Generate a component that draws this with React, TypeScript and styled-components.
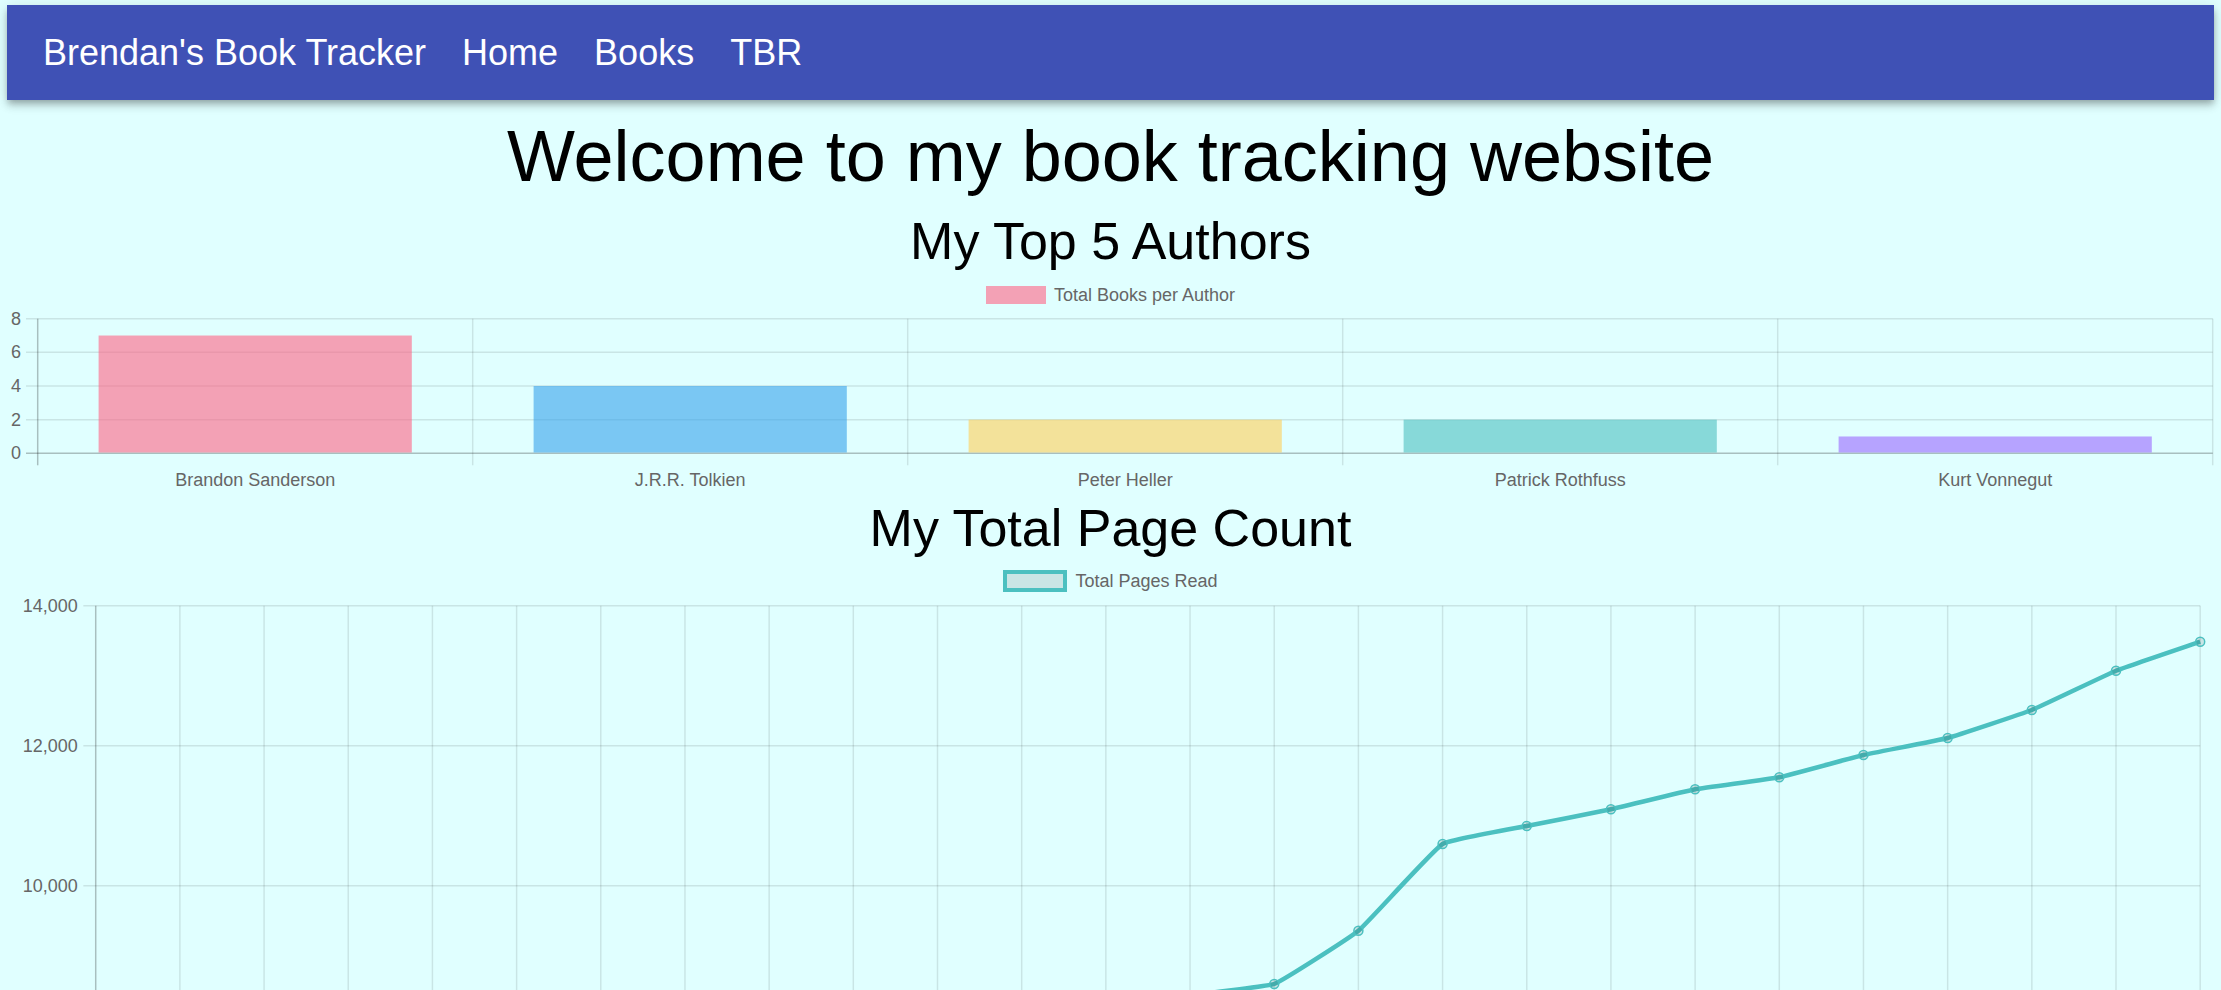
import React from 'react';
import styled, { createGlobalStyle } from 'styled-components';

const GlobalStyle = createGlobalStyle`
  html { scrollbar-width: none; }
  html::-webkit-scrollbar, body::-webkit-scrollbar { display: none; }
  body {
    margin: 0;
    background: #e0ffff;
    font-family: "Liberation Sans", Arial, Helvetica, sans-serif;
  }
`;

const Page = styled.div`
  padding-top: 5px;
`;

const NavBar = styled.header`
  display: flex;
  align-items: center;
  gap: 36px;
  height: 95px;
  margin: 0 7px;
  padding: 2px 36px 0;
  box-sizing: border-box;
  background: #3f51b5;
  color: #ffffff;
  box-shadow: 0 3px 6px -1.5px rgba(0, 0, 0, 0.2), 0 6px 7.5px 0 rgba(0, 0, 0, 0.14),
    0 1.5px 15px 0 rgba(0, 0, 0, 0.12);
`;

const NavItem = styled.a`
  font-size: 36px;
  line-height: 1.334;
  font-weight: 400;
  color: inherit;
  text-decoration: none;
  white-space: nowrap;
`;

const Main = styled.main`
  display: flex;
  flex-direction: column;
  text-align: center;
`;

const Title = styled.h1`
  margin: 14px 0 0;
  font-size: 72px;
  line-height: 1.167;
  font-weight: 400;
  color: #000;
`;

const SectionTitle = styled.h2<{ $gap: number }>`
  margin: ${(p) => p.$gap}px 0 0;
  font-size: 52px;
  line-height: 1.235;
  font-weight: 400;
  color: #000;
`;

const Legend = styled.div<{ $gap: number }>`
  display: flex;
  justify-content: center;
  align-items: center;
  gap: 8px;
  height: 18px;
  margin-top: ${(p) => p.$gap}px;
`;

const Swatch = styled.span<{ $fill: string; $stroke?: string }>`
  box-sizing: border-box;
  width: ${(p) => (p.$stroke ? 64 : 60)}px;
  height: ${(p) => (p.$stroke ? 22 : 18)}px;
  background: ${(p) => p.$fill};
  border: ${(p) => (p.$stroke ? `4px solid ${p.$stroke}` : 'none')};
`;

const LegendLabel = styled.span`
  font-size: 18px;
  line-height: 18px;
  color: #666;
`;

const ChartSvg = styled.svg`
  display: block;
  font-family: "Liberation Sans", Arial, sans-serif;
  font-size: 18px;
`;

const GRID = 'rgba(0,0,0,0.1)';
const ZERO = 'rgba(0,0,0,0.25)';
const TEAL = 'rgb(75,192,192)';

const authors = [
  { name: 'Brandon Sanderson', count: 7, color: 'rgba(255,99,132,0.6)' },
  { name: 'J.R.R. Tolkien', count: 4, color: 'rgba(54,162,235,0.6)' },
  { name: 'Peter Heller', count: 2, color: 'rgba(255,206,86,0.6)' },
  { name: 'Patrick Rothfuss', count: 2, color: 'rgba(75,192,192,0.6)' },
  { name: 'Kurt Vonnegut', count: 1, color: 'rgba(153,102,255,0.6)' },
];

const BarChart: React.FC = () => {
  const W = 2221;
  const H = 190;
  const top = 14.7;
  const unit = 16.825;
  const left = 37.7;
  const cat = 435;
  const right = left + cat * authors.length;
  const y = (v: number) => top + (8 - v) * unit;
  const barW = cat * 0.72;
  return (
    <ChartSvg width={W} height={H} viewBox={`0 0 ${W} ${H}`}>
      {[8, 6, 4, 2, 0].map((v) => (
        <g key={v}>
          <line x1={26} x2={right} y1={y(v)} y2={y(v)} stroke={v === 0 ? ZERO : GRID} strokeWidth={1.5} />
          <text x={21} y={y(v)} textAnchor="end" dominantBaseline="central" fill="#666">
            {v}
          </text>
        </g>
      ))}
      {authors.concat([authors[0]]).map((_, i) => (
        <line
          key={`v${i}`}
          x1={left + i * cat}
          x2={left + i * cat}
          y1={top}
          y2={y(0) + 12}
          stroke={i === 0 ? ZERO : GRID}
          strokeWidth={1.5}
        />
      ))}
      {authors.map((a, i) => (
        <g key={a.name}>
          <rect
            x={left + i * cat + (cat - barW) / 2}
            y={y(a.count)}
            width={barW}
            height={y(0) - y(a.count) - 0.8}
            fill={a.color}
          />
          <text x={left + i * cat + cat / 2} y={176} textAnchor="middle" dominantBaseline="central" fill="#666">
            {a.name}
          </text>
        </g>
      ))}
    </ChartSvg>
  );
};

const pages = [
  350, 1100, 1650, 2300, 2900, 3450, 4100, 4700, 5250, 5900, 6500, 7100, 7800, 8424, 8596, 9357, 10596, 10853,
  11091, 11377, 11549, 11867, 12110, 12510, 13071, 13486,
];

type Pt = { x: number; y: number };

const splinePath = (pts: Pt[], t: number) => {
  const cps = pts.map((cur, i) => {
    const prev = pts[i - 1] || cur;
    const next = pts[i + 1] || cur;
    const d01 = Math.hypot(cur.x - prev.x, cur.y - prev.y);
    const d12 = Math.hypot(next.x - cur.x, next.y - cur.y);
    let s01 = d01 / (d01 + d12);
    let s12 = d12 / (d01 + d12);
    if (isNaN(s01)) s01 = 0;
    if (isNaN(s12)) s12 = 0;
    const fa = t * s01;
    const fb = t * s12;
    return {
      p: { x: cur.x - fa * (next.x - prev.x), y: cur.y - fa * (next.y - prev.y) },
      n: { x: cur.x + fb * (next.x - prev.x), y: cur.y + fb * (next.y - prev.y) },
    };
  });
  let d = `M${pts[0].x},${pts[0].y}`;
  for (let i = 1; i < pts.length; i++) {
    const a = cps[i - 1].n;
    const b = cps[i].p;
    d += ` C${a.x},${a.y} ${b.x},${b.y} ${pts[i].x},${pts[i].y}`;
  }
  return d;
};

const LineChart: React.FC = () => {
  const W = 2221;
  const top = 15.7;
  const scale = 0.07;
  const x0 = 95.7;
  const step = 84.18;
  const bottom = top + 14000 * scale;
  const H = bottom + 50;
  const right = x0 + step * (pages.length - 1);
  const y = (v: number) => top + (14000 - v) * scale;
  const pts = pages.map((v, i) => ({ x: x0 + i * step, y: y(v) }));
  const ticks = [14000, 12000, 10000, 8000, 6000, 4000, 2000, 0];
  return (
    <ChartSvg width={W} height={H} viewBox={`0 0 ${W} ${H}`}>
      {ticks.map((v) => (
        <g key={v}>
          <line x1={83.3} x2={right} y1={y(v)} y2={y(v)} stroke={v === 0 ? ZERO : GRID} strokeWidth={1.5} />
          <text x={77.7} y={y(v)} textAnchor="end" dominantBaseline="central" fill="#666">
            {v.toLocaleString('en-US')}
          </text>
        </g>
      ))}
      {pages.map((_, i) => (
        <line
          key={`v${i}`}
          x1={x0 + i * step}
          x2={x0 + i * step}
          y1={top}
          y2={bottom + 12}
          stroke={i === 0 ? ZERO : GRID}
          strokeWidth={1.5}
        />
      ))}
      <path d={splinePath(pts, 0.1)} fill="none" stroke={TEAL} strokeWidth={4.5} />
      {pts.map((p, i) => (
        <circle key={i} cx={p.x} cy={p.y} r={4.5} fill="rgba(0,0,0,0.1)" stroke={TEAL} strokeWidth={1.5} />
      ))}
    </ChartSvg>
  );
};

export default function App() {
  return (
    <Page>
      <GlobalStyle />
      <NavBar>
        <NavItem>Brendan's Book Tracker</NavItem>
        <NavItem href="#">Home</NavItem>
        <NavItem href="#">Books</NavItem>
        <NavItem href="#">TBR</NavItem>
      </NavBar>
      <Main>
        <Title>Welcome to my book tracking website</Title>
        <SectionTitle $gap={11}>My Top 5 Authors</SectionTitle>
        <Legend $gap={13}>
          <Swatch $fill="rgba(255,99,132,0.6)" />
          <LegendLabel>Total Books per Author</LegendLabel>
        </Legend>
        <BarChart />
        <SectionTitle $gap={2}>My Total Page Count</SectionTitle>
        <Legend $gap={12}>
          <Swatch $fill="rgba(0,0,0,0.1)" $stroke={TEAL} />
          <LegendLabel>Total Pages Read</LegendLabel>
        </Legend>
        <LineChart />
      </Main>
    </Page>
  );
}
